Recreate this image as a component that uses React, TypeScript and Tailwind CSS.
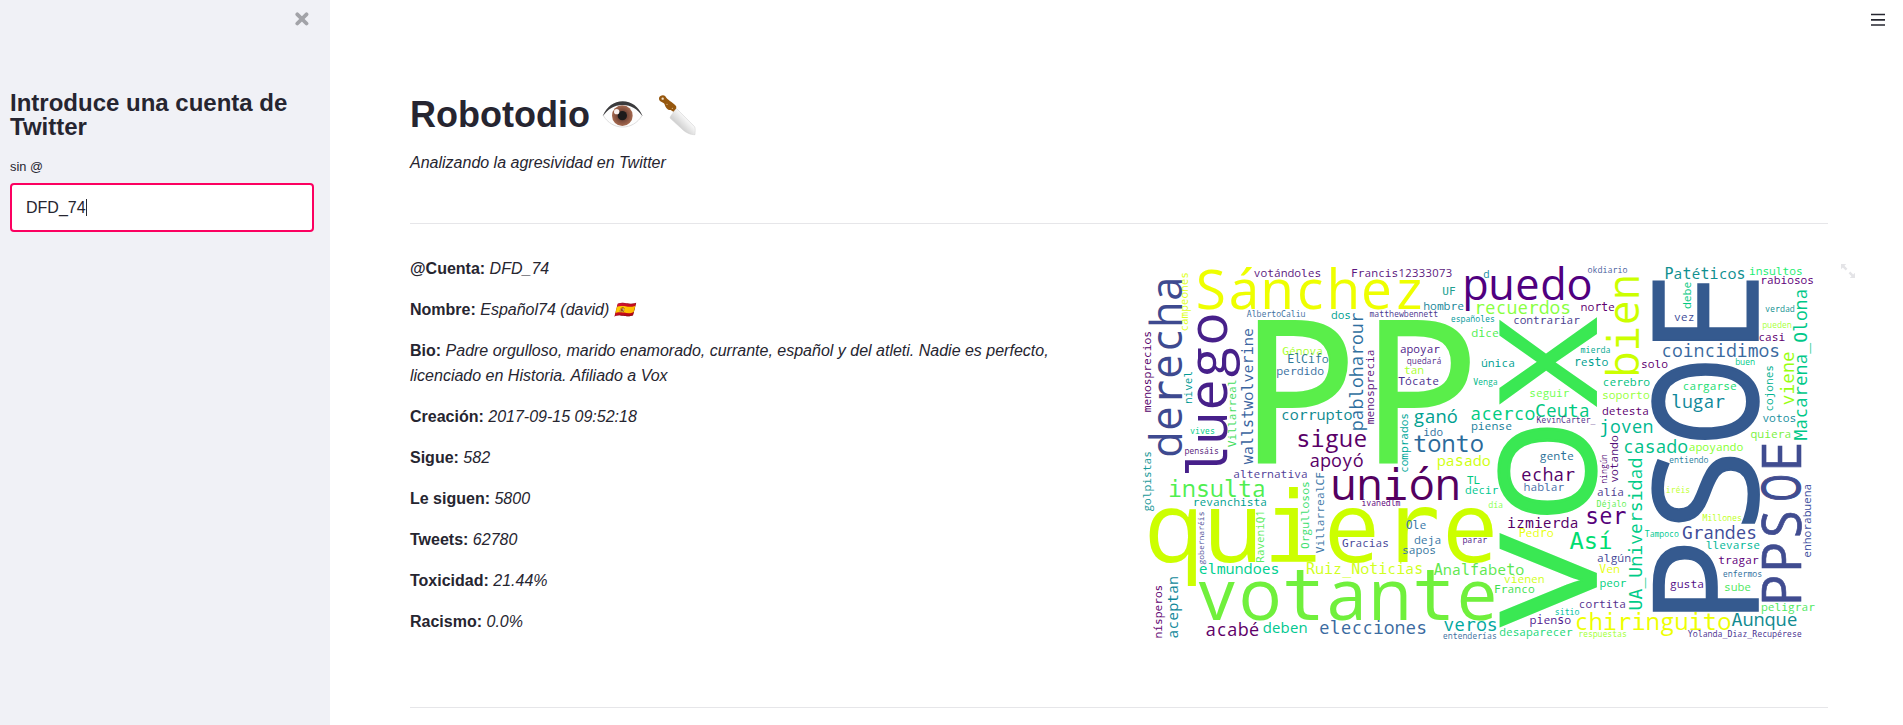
import React from "react";

type Word = [text: string, start: number, baseline: number, end: number, color: string];
type Tile = { dx: number; dy: number; across: Word[]; up: Word[] };

// Cloud units are a third of a pixel. "across": left edge, baseline y, right edge.
// "up": bottom edge, baseline x, top edge.
const tiles: Tile[] = [
  {
    dx: 0,
    dy: 0,
    across: [
      ["votándoles", 373, 66, 572, "#5c187e"],
      ["Sánchez", 203, 163, 878, "#eeff00"],
      ["Francis12333073", 665, 66, 965, "#5c1880"],
      ["AlbertoCaliu", 352, 187, 525, "#4070a0"],
      ["dos", 605, 192, 661, "#00a090"],
      ["matthewbennett", 720, 185, 923, "#4c3a90"],
      ["Génova", 459, 299, 577, "#aaff30"],
      ["ElCifo", 474, 324, 594, "#307a98"],
      ["perdido", 441, 360, 580, "#3a70a0"],
      ["corrupto", 455, 495, 665, "#108a90"],
      ["sigue", 503, 577, 708, "#5a0068"],
      ["vives", 182, 538, 253, "#00cc88"],
      ["pensáis", 165, 598, 265, "#55187a"],
    ],
    up: [
      ["derecha", 600, 156, 70, "#3e4a90"],
      ["campeones", 228, 174, 53, "#ddff20"],
      ["menosprecios", 470, 64, 230, "#55006a"],
      ["nivel", 445, 187, 350, "#009a94"],
      ["luego", 657, 290, 183, "#47208a"],
      ["Villarreal", 575, 318, 375, "#44dd60"],
      ["wallstwolverine", 625, 369, 222, "#3a64a0"],
      ["pabloharour", 525, 700, 176, "#3070a0"],
      ["menosprecia", 506, 731, 285, "#5c187e"],
    ],
  },
  {
    dx: 720,
    dy: 0,
    across: [
      ["d", 342, 70, 357, "#108aa0"],
      ["UF", 219, 120, 255, "#20a090"],
      ["hombre", 162, 164, 280, "#20889a"],
      ["puedo", 285, 135, 660, "#500080"],
      ["recuerdos", 316, 178, 600, "#88ff40"],
      ["norte", 634, 168, 733, "#600070"],
      ["españoles", 244, 200, 373, "#00989a"],
      ["contrariar", 431, 206, 628, "#484090"],
      ["dice", 306, 246, 385, "#50ee50"],
      ["okdiario", 654, 54, 771, "#4a60a0"],
      ["apoyar", 92, 294, 208, "#4c1a88"],
      ["quedará", 112, 326, 213, "#54308e"],
      ["tan", 104, 357, 160, "#aaff30"],
      ["Tócate", 87, 389, 205, "#4a3090"],
      ["única", 335, 336, 433, "#00a090"],
      ["resto", 614, 333, 713, "#00a090"],
      ["mierda", 633, 293, 720, "#00a890"],
      ["Venga", 311, 391, 382, "#00b88a"],
      ["seguir", 480, 427, 596, "#70ff50"],
      ["acerco", 304, 495, 493, "#00cc80"],
      ["Ceuta", 498, 487, 656, "#00c880"],
      ["KevinCarter_", 501, 503, 675, "#55308a"],
      ["piense", 305, 524, 424, "#20809a"],
      ["ganó", 134, 503, 260, "#00a090"],
      ["ido", 162, 542, 217, "#3070a0"],
      ["tonto", 133, 592, 338, "#2a6a9a"],
    ],
    up: [["comprados", 652, 115, 476, "#00a89a"]],
  },
  {
    dx: 1410,
    dy: 0,
    across: [
      ["Patéticos", 196, 73, 434, "#109090"],
      ["insultos", 449, 61, 606, "#20ee70"],
      ["rabiosos", 483, 87, 640, "#60007a"],
      ["verdad", 497, 170, 583, "#109090"],
      ["pueden", 488, 218, 574, "#a8ff40"],
      ["casi", 477, 257, 554, "#600070"],
      ["vez", 224, 198, 282, "#404c98"],
      ["coincidimos", 187, 305, 537, "#3a6aa0"],
      ["solo", 125, 338, 202, "#600070"],
      ["buen", 407, 329, 464, "#00cc88"],
      ["cerebro", 10, 392, 148, "#00c080"],
      ["soporto", 8, 433, 147, "#98ff40"],
      ["cargarse", 250, 404, 408, "#20dd70"],
      ["lugar", 217, 459, 372, "#10889a"],
      ["detesta", 8, 481, 145, "#600070"],
      ["joven", 1, 535, 157, "#00b890"],
      ["votos", 489, 501, 587, "#1a90a0"],
      ["quiera", 454, 548, 572, "#78f040"],
      ["casado", 72, 594, 261, "#00c088"],
      ["apoyando", 268, 587, 428, "#88ff30"],
    ],
    up: [
      ["debe", 160, 273, 82, "#00c880"],
      ["bien", 360, 118, 65, "#ccff00"],
      ["cojones", 468, 519, 332, "#00b090"],
      ["viene", 448, 581, 292, "#98ff10"],
      ["Macarena_Olona", 553, 622, 104, "#00c888"],
    ],
  },
  {
    dx: 0,
    dy: 570,
    across: [
      ["alternativa", 312, 99, 531, "#504098"],
      ["apoyó", 541, 66, 698, "#5a0068"],
      ["unión", 609, 165, 985, "#540060"],
      ["ivanedlm", 696, 184, 810, "#5c007a"],
      ["insulta", 118, 157, 404, "#50ee50"],
      ["revanchista", 190, 184, 409, "#00a090"],
      ["quiere", 62, 350, 1091, "#ccff00"],
      ["Gracias", 638, 306, 775, "#48489a"],
      ["elmundoes", 209, 387, 446, "#00d090"],
      ["Ruiz_Noticias", 531, 387, 877, "#d0ff20"],
      ["votante", 208, 524, 1093, "#70f03c"],
      ["acabé", 229, 572, 385, "#600068"],
      ["deben", 401, 563, 530, "#00c890"],
      ["elecciones", 570, 568, 888, "#3a6aa0"],
    ],
    up: [
      ["golpistas", 198, 63, 20, "#1a9898"],
      ["gobernaréis", 357, 223, 201, "#505098"],
      ["RaveniQ1", 351, 402, 197, "#60ee60"],
      ["Orgullosos", 310, 538, 111, "#40e070"],
      ["VillarrealCF", 323, 581, 83, "#4078a8"],
      ["nísperos", 578, 95, 421, "#600070"],
      ["aceptan", 578, 143, 396, "#10889a"],
    ],
  },
  {
    dx: 720,
    dy: 570,
    across: [
      ["pasado", 203, 63, 360, "#d0ff10"],
      ["TL", 293, 117, 328, "#00c880"],
      ["decir", 287, 147, 383, "#00c890"],
      ["día", 356, 190, 398, "#88ff50"],
      ["Ole", 109, 251, 167, "#3878a8"],
      ["deja", 134, 297, 212, "#3878a8"],
      ["sapos", 98, 328, 196, "#3878a0"],
      ["parar", 279, 293, 350, "#501a88"],
      ["Analfabeto", 194, 389, 460, "#60e850"],
      ["vienen", 404, 414, 522, "#d0ff20"],
      ["Franco", 374, 443, 492, "#40e050"],
      ["izmierda", 414, 248, 623, "#560068"],
      ["Pedro", 448, 275, 549, "#e8ff10"],
      ["echar", 456, 107, 612, "#540068"],
      ["gente", 511, 45, 610, "#2a7098"],
      ["hablar", 463, 137, 581, "#4870a8"],
      ["alía", 683, 152, 760, "#504090"],
      ["Déjalo", 681, 185, 768, "#60f050"],
      ["ser", 650, 238, 765, "#55007a"],
      ["Así", 603, 312, 723, "#00dd70"],
      ["algún", 683, 351, 781, "#444898"],
      ["Ven", 690, 383, 748, "#e8ff10"],
      ["peor", 691, 426, 767, "#00d080"],
      ["cortita", 628, 489, 766, "#55308e"],
      ["sitio", 556, 509, 627, "#00c0a0"],
      ["pienso", 481, 538, 601, "#502090"],
      ["chiringuito", 617, 555, 1080, "#eeff00"],
      ["respuestas", 626, 575, 769, "#a0ff30"],
      ["desaparecer", 390, 573, 606, "#20d878"],
      ["veros", 223, 557, 380, "#00a8a0"],
      ["entenderías", 220, 582, 379, "#4070a0"],
    ],
    up: [
      ["ningún", 115, 711, 29, "#58107a"],
      ["votando", 111, 745, -27, "#54107a"],
    ],
  },
  {
    dx: 1410,
    dy: 570,
    across: [
      ["entiendo", 209, 53, 324, "#2a80a0"],
      ["iréis", 199, 143, 269, "#c0ff30"],
      ["Millones", 309, 229, 424, "#c0ff20"],
      ["Tampoco", 136, 277, 235, "#00c890"],
      ["Grandes", 249, 283, 468, "#404c98"],
      ["llevarse", 319, 311, 478, "#00b898"],
      ["tragar", 357, 356, 474, "#60007a"],
      ["enfermos", 370, 396, 485, "#3070a0"],
      ["gusta", 212, 428, 310, "#551088"],
      ["sube", 374, 437, 451, "#50e860"],
      ["peligrar", 485, 497, 643, "#50e860"],
      ["Aunque", 398, 543, 590, "#108a90"],
      ["Yolanda_Diaz_Recupérese", 265, 577, 604, "#483090"],
    ],
    up: [
      ["enhorabuena", 336, 633, 118, "#4050a0"],
      ["UA_Universidad", 493, 127, 41, "#00cc88"],
    ],
  },
];

// Large capitals are fitted one by one: ink start, ink end, baseline, cap height.
type Capital = [letter: string, from: number, to: number];
type Headline = { color: string; baseline: number; cap: number; up: boolean; letters: Capital[] };

const headlines: Headline[] = [
  { color: "#5aee4a", baseline: 627, cap: 432, up: false, letters: [["P", 384, 657], ["P", 748, 1023]] },
  { color: "#3ae853", baseline: 1401, cap: 292, up: true, letters: [["V", 1116, 835], ["O", 780, 517], ["X", 453, 187]] },
  { color: "#355a8f", baseline: 1886, cap: 317, up: true, letters: [["P", 1070, 870], ["S", 810, 605], ["O", 555, 324], ["E", 258, 75]] },
  { color: "#404c90", baseline: 2013, cap: 119, up: true, letters: [["P", 1040, 965], ["P", 940, 867], ["S", 843, 773], ["O", 735, 662], ["E", 636, 568]] },
];

// Left ink edge, right ink edge and extra outline, in thousandths of an em.
const ink: Record<string, [number, number, number]> = {
  P: [98, 556, 11],
  S: [42, 500, 13],
  O: [61, 718, 24],
  E: [98, 499, 10],
  V: [0, 597, 13],
  X: [4, 580, 14],
};

// Letters whose humanist shape fits inside a fixed-width cell.
const humanist = new Set("abcdeghknopquvxyzáéóúñS0123456789");

function CloudWord({ word, up }: { word: Word; up?: boolean }) {
  const [text, start, baseline, end, color] = word;
  const span = Math.abs(end - start);
  const advance = span / (text.length - 0.2);
  const lead = advance * 0.1;
  const place = up
    ? `translate(${baseline} ${start + lead}) rotate(-90)`
    : `translate(${start - lead} ${baseline})`;
  const runs: { chars: string; at: number; human: boolean }[] = [];
  [...text].forEach((c, i) => {
    const human = humanist.has(c);
    const last = runs[runs.length - 1];
    if (last && last.human === human) last.chars += c;
    else runs.push({ chars: c, at: i, human });
  });
  return (
    <text transform={place} fontSize={advance / 0.602} textAnchor="middle" fill={color}>
      {runs.map((r) => (
        <tspan
          key={r.at}
          x={[...r.chars].map((_, i) => ((r.at + i + 0.5) * advance).toFixed(2)).join(" ")}
          className={r.human ? "font-['Open_Sans',sans-serif]" : "font-['DejaVu_Sans_Mono',monospace]"}
        >
          {r.chars}
        </tspan>
      ))}
    </text>
  );
}

function WordCloud() {
  return (
    <svg viewBox="15 0 2079 1200" className="block h-[400px] w-[693px] overflow-visible">
      {headlines.map((h) =>
        h.letters.map(([letter, from, to], i) => {
          const [lo, hi, outline] = ink[letter];
          const sx = Math.abs(to - from) / (hi - lo + outline);
          const sy = h.cap / (714 + outline);
          const place = h.up
            ? `translate(${h.baseline} ${from}) rotate(-90) scale(${sx} ${sy})`
            : `translate(${from} ${h.baseline}) scale(${sx} ${sy})`;
          return (
            <text
              key={`${h.color}${i}`}
              transform={place}
              x={outline / 2 - lo}
              y={-outline / 2}
              fontSize={1000}
              fill={h.color}
              stroke={h.color}
              strokeWidth={outline}
              className="font-['Open_Sans',sans-serif]"
            >
              {letter}
            </text>
          );
        }),
      )}
      {tiles.map((t) => (
        <g key={`${t.dx}-${t.dy}`} transform={`translate(${t.dx} ${t.dy})`}>
          {t.across.map((w) => (
            <CloudWord key={w[0]} word={w} />
          ))}
          {t.up.map((w) => (
            <CloudWord key={w[0]} word={w} up />
          ))}
        </g>
      ))}
    </svg>
  );
}

const details: [string, string][] = [
  ["@Cuenta:", "DFD_74"],
  ["Nombre:", "Español74 (david) 🇪🇸"],
  ["Bio:", "Padre orgulloso, marido enamorado, currante, español y del atleti. Nadie es perfecto, licenciado en Historia. Afiliado a Vox"],
  ["Creación:", "2017-09-15 09:52:18"],
  ["Sigue:", "582"],
  ["Le siguen:", "5800"],
  ["Tweets:", "62780"],
  ["Toxicidad:", "21.44%"],
  ["Racismo:", "0.0%"],
];

function TitleEmoji() {
  return (
    <svg className="-mt-[6px] ml-[6px] shrink-0" width="108" height="56" viewBox="0 0 324 168" role="img" aria-label="Ojo y cuchillo">
      <defs>
        <linearGradient id="blade" x1="0" y1="1" x2="1" y2="0">
          <stop offset="0.35" stopColor="#d2d2d2" />
          <stop offset="0.6" stopColor="#f4f4f4" />
        </linearGradient>
        <radialGradient id="iris">
          <stop offset="0.5" stopColor="#7a4a3a" />
          <stop offset="1" stopColor="#a5694f" />
        </radialGradient>
      </defs>
      <path d="M22 89C38 64 56 50 80 50s44 14 58 39c-14 22-34 34-58 34S36 111 22 89z" fill="#fdfdfd" stroke="#dedede" strokeWidth="3" />
      <circle cx="79" cy="89" r="31" fill="url(#iris)" />
      <circle cx="79" cy="89" r="14" fill="#1d1b1b" />
      <circle cx="62" cy="77" r="8" fill="#f8f0ee" />
      <path d="M20 91C32 62 54 46 80 46s48 16 60 45c-16-22-34-34-60-34S36 69 20 91z" fill="#3b3b3d" />
      <path d="M240 66L296 122C299 129 297 139 297 146C283 147 268 139 258 129L222 96C223 89 231 84 232 78z" fill="url(#blade)" stroke="#cfcfcf" strokeWidth="1.5" />
      <path d="M189 36C191 28 203 25 208 31C213 42 229 48 240 60C243 67 238 71 232 77L224 72C213 73 208 62 205 53C199 47 188 48 189 36z" fill="#96570e" />
      <circle cx="200" cy="38" r="3.5" fill="#f3e3cc" />
      <circle cx="213" cy="55" r="2" fill="#e0b780" />
      <circle cx="229" cy="67" r="2" fill="#e0b780" />
    </svg>
  );
}

function Sidebar() {
  return (
    <aside className="h-full w-[330px] shrink-0 bg-[#f0f1f6] pl-[10px] pr-4">
      <div className="flex h-[91px] justify-end pr-[5px] pt-3">
        <svg width="14" height="14" viewBox="0 0 14 14" aria-label="Cerrar">
          <path d="M2.3 2.3 L11.5 11.5 M11.5 2.3 L2.3 11.5" stroke="#a2a3a8" strokeWidth="3.8" strokeLinecap="round" />
        </svg>
      </div>
      <h2 className="text-2xl font-bold leading-6">Introduce una cuenta de Twitter</h2>
      <label className="mt-[18px] block text-[12.8px] leading-5">sin @</label>
      <div className="mt-[6px] flex h-[49px] items-center rounded-[4px] border-2 border-[#fc0060] bg-white pl-[14px] text-base leading-6">
        <span>DFD_74</span>
        <span className="h-[17px] w-px bg-[#262730]" />
      </div>
    </aside>
  );
}

export default function App() {
  return (
    <div className="flex h-[725px] w-full overflow-hidden bg-white font-['Liberation_Sans',Arial,sans-serif] text-[#262530]">
      <Sidebar />
      <main className="relative min-w-0 flex-1 pl-20 pr-[75px]">
        <svg className="absolute right-[18px] top-[13px]" width="14" height="13" viewBox="0 0 14 13" aria-label="Menú">
          <path d="M0 1.5h14M0 6.8h14M0 12h14" stroke="#262730" strokeWidth="1.7" />
        </svg>
        <h1 className="flex h-[137px] items-start pt-[92px] text-4xl font-bold leading-[45px]">
          Robotodio
          <TitleEmoji />
        </h1>
        <p className="mt-[13px] text-base italic leading-[25px]">Analizando la agresividad en Twitter</p>
        <hr className="mt-12 border-0 border-t border-[#e6e6e9]" />
        <div className="flex gap-8 pt-[31px]">
          <div className="w-[693px] shrink-0 pt-px">
            {details.map(([label, value]) => (
              <p key={label} className="mb-4 text-base leading-[25px]">
                <strong className="font-bold">{label}</strong> <em>{value}</em>
              </p>
            ))}
          </div>
          <div className="relative h-[452px] w-[693px] shrink-0">
            <WordCloud />
            <svg className="absolute -right-[27px] top-[9px]" width="14" height="14" viewBox="0 0 14 14" aria-label="Ampliar">
              <path d="M0 0h5.2L3.5 1.8 6.4 4.7 4.7 6.4 1.8 3.5 0 5.2zM14 14H8.8l1.7-1.8-2.9-2.9 1.7-1.7 2.9 2.9L14 8.8z" fill="#e4e4e7" />
            </svg>
          </div>
        </div>
        <hr className="border-0 border-t border-[#e6e6e9]" />
      </main>
    </div>
  );
}
